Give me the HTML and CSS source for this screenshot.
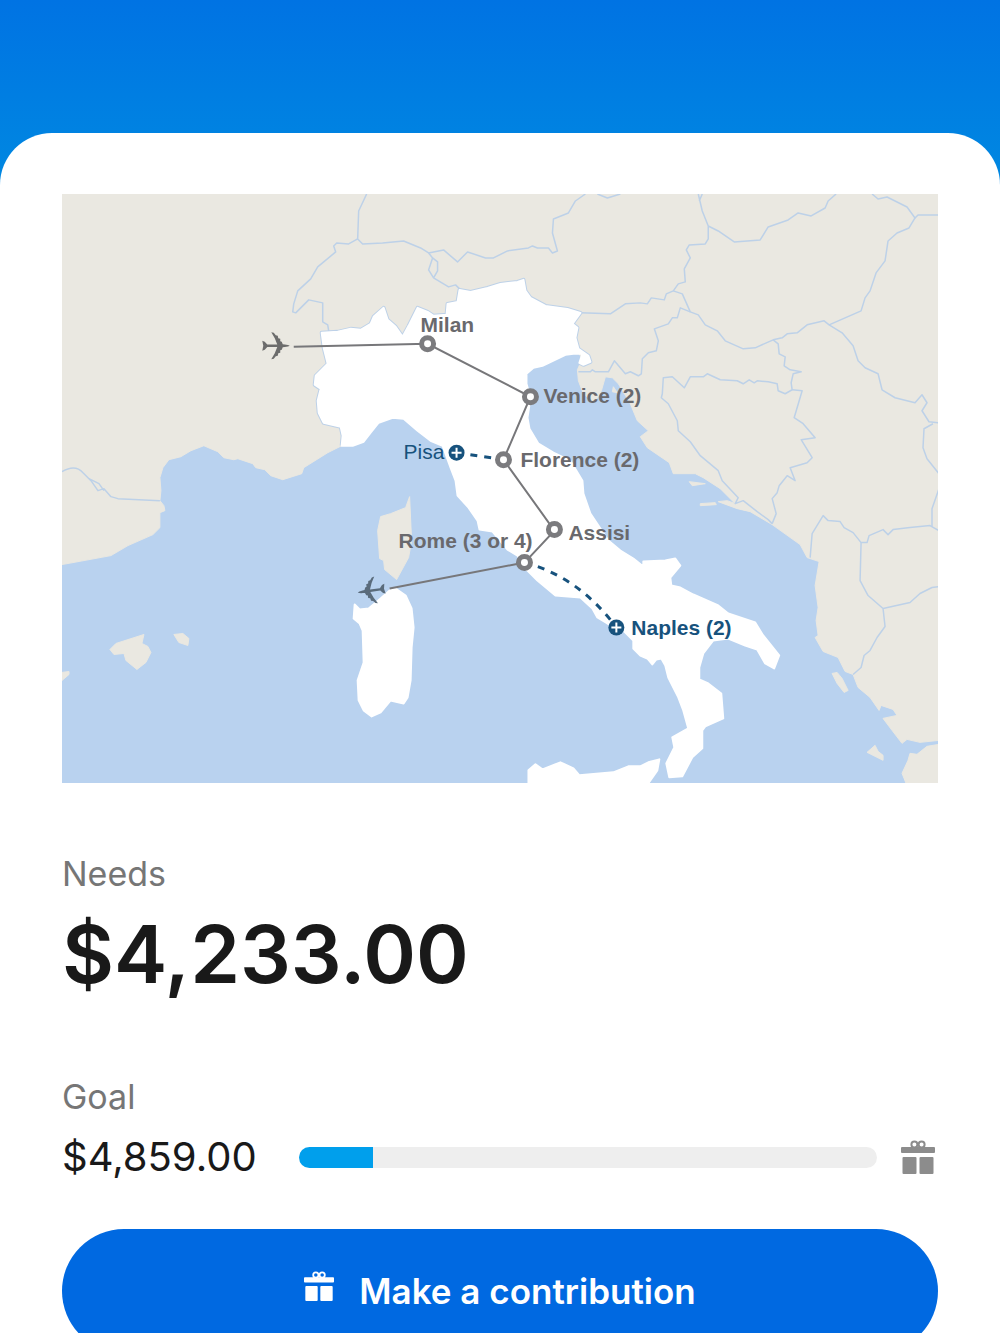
FILE: index.html
```html
<!DOCTYPE html>
<html lang="en">
<head>
    <meta charset="UTF-8">
    <meta name="viewport" content="width=device-width, initial-scale=1.0">
    <title>Make a contribution</title>
    <link rel="stylesheet" href="styles.css">
</head>
<body>
    <main class="card">
        <svg class="map" viewBox="61 193 877 590" role="img" aria-label="Map of Italy with the trip route">
            <!-- mainland Europe -->
            <path class="land" d="M61 193H939V740L920 742 907 739 902 743 892 730 883 718 897 715 893 709 881 705 879 710 870 697 858 687 853 674 845 671 838 657 823 651 815 637 818 635 816 620 818 607 815 585 819 561 807 557 800 544 772 524 750 511 737 508 718 501 727 500 735 503 720 488 703 477 695 473 673 473 669 462 647 447 640 436 648 430 637 420 630 403 618 383 612 377 605 376 601 390 594 402 583 393 578 380 577 369 582 358 570 340 400 400 341 445 327 452 303 467 301 473 282 479 270 475 264 469 255 467 252 463 237 458 233 459 223 457 217 451 203 445 190 450 180 456 168 459 162 467 159 477 160 490 159 500 163 505 164 510 159 512 159 527 152 534 127 545 110 555 61 564Z"/>

            <!-- islands and the Peloponnese -->
            <path class="land" d="M409 496L411 540 408 557 396 579 384 569 383 560 379 558 377 530 380 516 390 513 405 507Z"/>
            <path class="land" d="M143 634L115 643 109 649 113 654 123 653 125 660 136 669 145 662 150 652 147 646 141 643Z"/>
            <path class="land" d="M173 634L182 633 188 638 187 645 178 642ZM61 672L68 671 68 674 61 680Z"/>
            <path class="land" d="M832 673L837 672 842 678 848 690 844 692 837 683ZM875 745L878 751 883 755 883 760 867 752Z"/>
            <path class="land" d="M939 744L927 746 917 754 910 753 908 760 902 773 906 783H939Z"/>
            <path class="land" d="M700 503L715 502 716 504 700 505ZM689 481L705 483 692 485ZM613 386L617 392 612 391Z"/>

            <!-- country borders -->
            <g class="border">
                <path d="M366 193L358 210 357 238 362 243 382 242 403 240 420 247 428 252 443 249 457 261 467 251 485 257 493 257 507 250 528 247 532 245 537 247 548 247 552 252 557 250 552 232 553 218 568 212 575 200 585 193M597 193L607 197 620 193"/>
                <path d="M357 238L348 243 336 242 333 245 335 251 317 266 310 278 297 290 293 303 292 311 295 312 308 299 322 302 322 321 327 324 328 330"/>
                <path d="M428 252L432 257 428 269 433 277 448 286 455 284 459 288M432 257L437 261 437 270 433 277"/>
                <path d="M580 312L610 313 625 303 640 302 647 303 651 297 664 299 666 293 673 290 678 283 685 281 684 268 690 257 686 249 689 244 705 243 708 238 708 225 702 210 698 193M699 200L702 193"/>
                <path d="M708 225L718 230 734 241 760 239 768 226 788 219 798 212 811 215 825 207 828 200 836 193"/>
                <path d="M872 193L878 198 887 196 907 206 915 217 918 214 939 214"/>
                <path d="M915 217L909 227 897 232 888 240 885 260 876 272 870 290 865 297 861 310 829 324 824 320 807 324 797 332 787 333 782 337 773 339 755 347 743 348 725 340 717 330 705 324 698 314 690 311 682 293 673 290"/>
                <path d="M690 311L680 307 677 317 672 317 668 323 654 328 658 340 656 350 648 352 642 358 641 373 638 375 630 371 625 373 614 360 608 371 595 371 592 369 590 371 578 371"/>
                <path d="M773 339L778 343 779 353 785 356 784 365 790 369 801 371 793 373 791 382 792 389 785 393 778 390 777 383 768 381 757 380 754 382 749 379 743 383 737 380 720 379 707 373 703 376 690 376 684 387 672 376 663 377 662 393 661 397 668 403 677 420 678 430 690 441 700 455 718 470 722 480 738 497 735 503 743 500 757 511 768 519 772 523"/>
                <path d="M792 389L802 390 794 417 803 423 815 437 801 439 812 457 807 462 790 467 795 480 787 475 779 485 777 492 772 498 776 513 772 523"/>
                <path d="M829 324L842 332 853 345 858 360 865 367 878 373 882 389 895 397 915 402 922 394 927 402 922 410 929 421 939 422M933 423L924 428 923 447 927 458 939 473M939 488L932 508 932 526"/>
                <path d="M810 557L812 533 823 515 828 520 840 521 844 527 853 532 861 542 867 542 869 535 883 529 888 534 893 529 910 527 930 525 939 530"/>
                <path d="M861 542L860 580 868 595 883 608 910 602 920 593 932 587 939 586M883 608L885 626 877 637 870 650 864 655 861 667 853 674"/>
                <path d="M61 471Q74 463 82 472L90 480 97 490 103 488 110 496 117 498 159 500M88 478L98 483 103 490"/>
            </g>

            <!-- Italy, Sardinia, Sicily -->
            <path class="italy-edge" d="M341 445L342 435 340 426 323 422 318 412 317 400 320 388 314 384 315 375 327 363 323 347 321 332 337 331 350 328 360 329 370 323 373 316 383 307 387 319 395 326 402 336 408 325 417 307 427 311 433 315 446 314 447 303 457 301 459 289 470 291 487 287 500 283 517 281 523 279 525 290 530 297 545 305 567 308 580 312 572 323 577 327 575 337 578 348 588 355 590 361 583 364 579 362"/>
            <path class="italy" d="M321 332L337 331 350 328 360 329 370 323 373 316 383 307 387 319 395 326 402 336 408 325 417 307 427 311 433 315 446 314 447 303 457 301 459 289 470 291 487 287 500 283 517 281 523 279 525 290 530 297 545 305 567 308 580 312 572 323 577 327 575 337 578 348 588 355 590 361 583 364 579 362 582 353 573 353 565 354 542 365 533 367 526 373 526 383 530 397 527 417 529 428 538 443 553 452 570 460 582 480 583 493 590 513 598 525 608 540 620 550 633 558 643 566 643 561 665 560 675 558 680 565 670 577 671 585 680 587 693 594 718 605 728 613 755 622 763 635 779 655 774 668 765 663 757 649 745 645 728 638 713 640 703 653 699 667 699 679 708 683 721 693 723 718 705 726 702 730 702 748 692 757 682 776 669 777 666 763 674 747 672 737 688 728 683 710 678 697 668 677 665 665 661 658 656 659 652 664 647 658 640 655 633 648 633 640 623 630 607 623 597 617 592 608 580 597 555 595 537 580 525 568 517 555 507 549 492 531 479 529 477 520 468 507 457 495 455 480 450 467 442 445 430 440 417 430 403 418 392 417 378 422 370 432 363 441 352 445 341 445 342 435 340 426 323 422 318 412 317 400 320 388 314 384 315 375 327 363 323 347Z"/>
            <path class="italy" d="M395 588L405 595 411 608 413 627 411 647 410 680 407 697 403 703 390 700 380 712 371 716 363 710 358 700 357 680 363 662 362 630 359 623 353 618 354 604 359 609 368 608 380 598 389 590Z"/>
            <path class="italy" d="M528 783V770L535 764 542 769 560 762 573 768 579 775 613 772 628 766 640 766 648 762 659 759 657 770 648 783Z"/>

            <!-- route -->
            <path class="route" d="M293 346L427 343 530 396 503 459 554 530 524 562 389 588"/>
            <path class="route-extra" d="M456 452L503 459M524 562Q578 576 616 627"/>
            <g class="stop">
                <circle cx="427" cy="343" r="6"/>
                <circle cx="530" cy="396" r="6"/>
                <circle cx="503" cy="459" r="6"/>
                <circle cx="554" cy="529" r="6"/>
                <circle cx="524" cy="562" r="6"/>
            </g>
            <g class="stop-extra">
                <circle cx="456" cy="452" r="8"/>
                <path d="M451 452h10M456 447v10"/>
                <circle cx="616" cy="627" r="8"/>
                <path d="M611 627h10M616 622v10"/>
            </g>
            <path class="plane" transform="translate(275 345)" d="M14 0Q13-1 9-1.300L7-1.500 6-4 4.500-4.500 4.500-7 2.500-7.500 2-10 0-10.500-2-13-4.500-13.500-1-7.500 1.500-1.200H-8.500L-11-4-13.500-5-12.500 0-13.500 5-11 4-8.500 1.200H1.500L-1 7.500-4.500 13.500-2 13 0 10.500 2 10 2.500 7.500 4.500 7 4.500 4.500 6 4 7 1.500 9 1.300Q13 1 14 0Z"/>
            <path class="plane return" transform="translate(371 590) rotate(172)" d="M14 0Q13-1 9-1.300L7-1.500 6-4 4.500-4.500 4.500-7 2.500-7.500 2-10 0-10.500-2-13-4.500-13.500-1-7.500 1.500-1.200H-8.500L-11-4-13.500-5-12.500 0-13.500 5-11 4-8.500 1.200H1.500L-1 7.500-4.500 13.500-2 13 0 10.500 2 10 2.500 7.500 4.500 7 4.500 4.500 6 4 7 1.500 9 1.300Q13 1 14 0Z"/>

            <g class="city">
                <text x="420" y="331">Milan</text>
                <text x="543" y="402">Venice (2)</text>
                <text x="520" y="466">Florence (2)</text>
                <text x="568" y="539">Assisi</text>
                <text x="398" y="547">Rome (3 or 4)</text>
                <text class="extra light" x="403" y="458">Pisa</text>
                <text class="extra" x="631" y="635">Naples (2)</text>
            </g>
        </svg>

        <section class="needs">
            <h2 class="label">Needs</h2>
            <p class="needs-amount">$4,233.00</p>
        </section>

        <section class="goal">
            <h2 class="label" id="goal-label">Goal</h2>
            <div class="goal-row">
                <span class="goal-amount">$4,859.00</span>
                <progress class="bar" value="626" max="4859" aria-labelledby="goal-label"></progress>
                <svg class="gift" viewBox="0 0 34 34" aria-hidden="true">
                    <circle cx="13.400" cy="4.500" r="3"/>
                    <circle cx="20.600" cy="4.500" r="3"/>
                    <rect x="0" y="7" width="34" height="6" rx="1"/>
                    <rect x="1.500" y="17" width="14" height="17" rx="1"/>
                    <rect x="18.500" y="17" width="14" height="17" rx="1"/>
                </svg>
            </div>
        </section>

        <button class="contribute" type="button">
            <svg class="gift" viewBox="0 0 34 34" aria-hidden="true">
                <circle cx="13.400" cy="4.500" r="3"/>
                <circle cx="20.600" cy="4.500" r="3"/>
                <rect x="0" y="7" width="34" height="6" rx="1"/>
                <rect x="1.500" y="17" width="14" height="17" rx="1"/>
                <rect x="18.500" y="17" width="14" height="17" rx="1"/>
            </svg>
            <span>Make a contribution</span>
        </button>
    </main>
</body>
</html>
```

FILE: styles.css
```css
* {
    box-sizing: border-box;
}
body {
    font-family: Inter, "Liberation Sans", sans-serif;
    margin: 0;
    padding-top: 133px;
    height: 100vh;
    overflow: hidden;
    color: #191919;
    background: #fff linear-gradient(#0073e3, #0089e1 190px) no-repeat;
    background-size: 100% 190px;
}
.card {
    padding: 61px 62px 40px;
    background-color: #fff;
    border-radius: 52px 52px 0 0;
}

/* map */
.map {
    display: block;
    width: 100%;
    height: auto;
    background-color: #b9d2ef;
}
.land {
    fill: #eae8e1;
    stroke: #eae8e1;
    stroke-linejoin: round;
}
.border {
    fill: none;
    stroke: #bdd1e8;
    stroke-width: 1.5;
    stroke-linejoin: round;
}
.italy {
    fill: #fff;
    stroke: #fff;
    stroke-width: 2;
    stroke-linejoin: round;
}
.italy-edge {
    fill: none;
    stroke: #bdd1e8;
    stroke-width: 4;
    stroke-linejoin: round;
}
.route {
    fill: none;
    stroke: #77777a;
    stroke-width: 2;
}
.route-extra {
    fill: none;
    stroke: #17527d;
    stroke-width: 3;
    stroke-dasharray: 7 7;
}
.stop circle {
    fill: #fff;
    stroke: #7b7b7e;
    stroke-width: 5;
}
.stop-extra circle {
    fill: #17527d;
}
.stop-extra path {
    stroke: #fff;
    stroke-width: 2;
}
.plane {
    fill: #6c6c6c;
}
.plane.return {
    fill: #5a6b7b;
}
.city {
    font-family: "Liberation Sans", Arial, sans-serif;
    font-size: 21px;
    font-weight: bold;
    fill: #69696d;
}
.city .extra {
    fill: #17527d;
}
.city .light {
    font-weight: normal;
}

/* amounts */
.label {
    margin: 0;
    font-size: 34px;
    line-height: 40px;
    font-weight: 400;
    color: #767676;
}
.needs {
    padding-top: 71px;
}
.needs-amount {
    margin: 12px 0 0;
    font-size: 80px;
    line-height: 96px;
    font-weight: 600;
}
.goal {
    padding-top: 75px;
}
.goal-row {
    display: flex;
    align-items: center;
    margin-top: 16px;
}
.goal-amount {
    width: 237px;
    font-size: 40px;
    line-height: 48px;
}
.bar {
    appearance: none;
    flex: 1;
    min-width: 0;
    height: 21px;
    margin-right: 24px;
    border: 0;
    border-radius: 11px;
    overflow: hidden;
    background-color: #eee;
}
.bar::-webkit-progress-bar {
    background-color: #eee;
}
.bar::-webkit-progress-value {
    background-color: #009fec;
}
.gift {
    width: 34px;
    height: 34px;
    margin-right: 3px;
    fill: #8c8c8c;
}
.gift circle {
    fill: none;
    stroke: #8c8c8c;
    stroke-width: 2;
}

/* button */
.contribute {
    display: flex;
    align-items: center;
    justify-content: center;
    gap: 25px;
    width: 100%;
    height: 124px;
    margin-top: 48px;
    border: 0;
    border-radius: 62px;
    color: #fff;
    background-color: #0069e1;
    font-family: inherit;
    font-size: 35px;
    line-height: 40px;
    font-weight: 600;
    cursor: pointer;
}
.contribute .gift {
    width: 30px;
    height: 30px;
    margin: 0 0 10px;
    fill: #fff;
}
.contribute .gift circle {
    stroke: #fff;
}
```
